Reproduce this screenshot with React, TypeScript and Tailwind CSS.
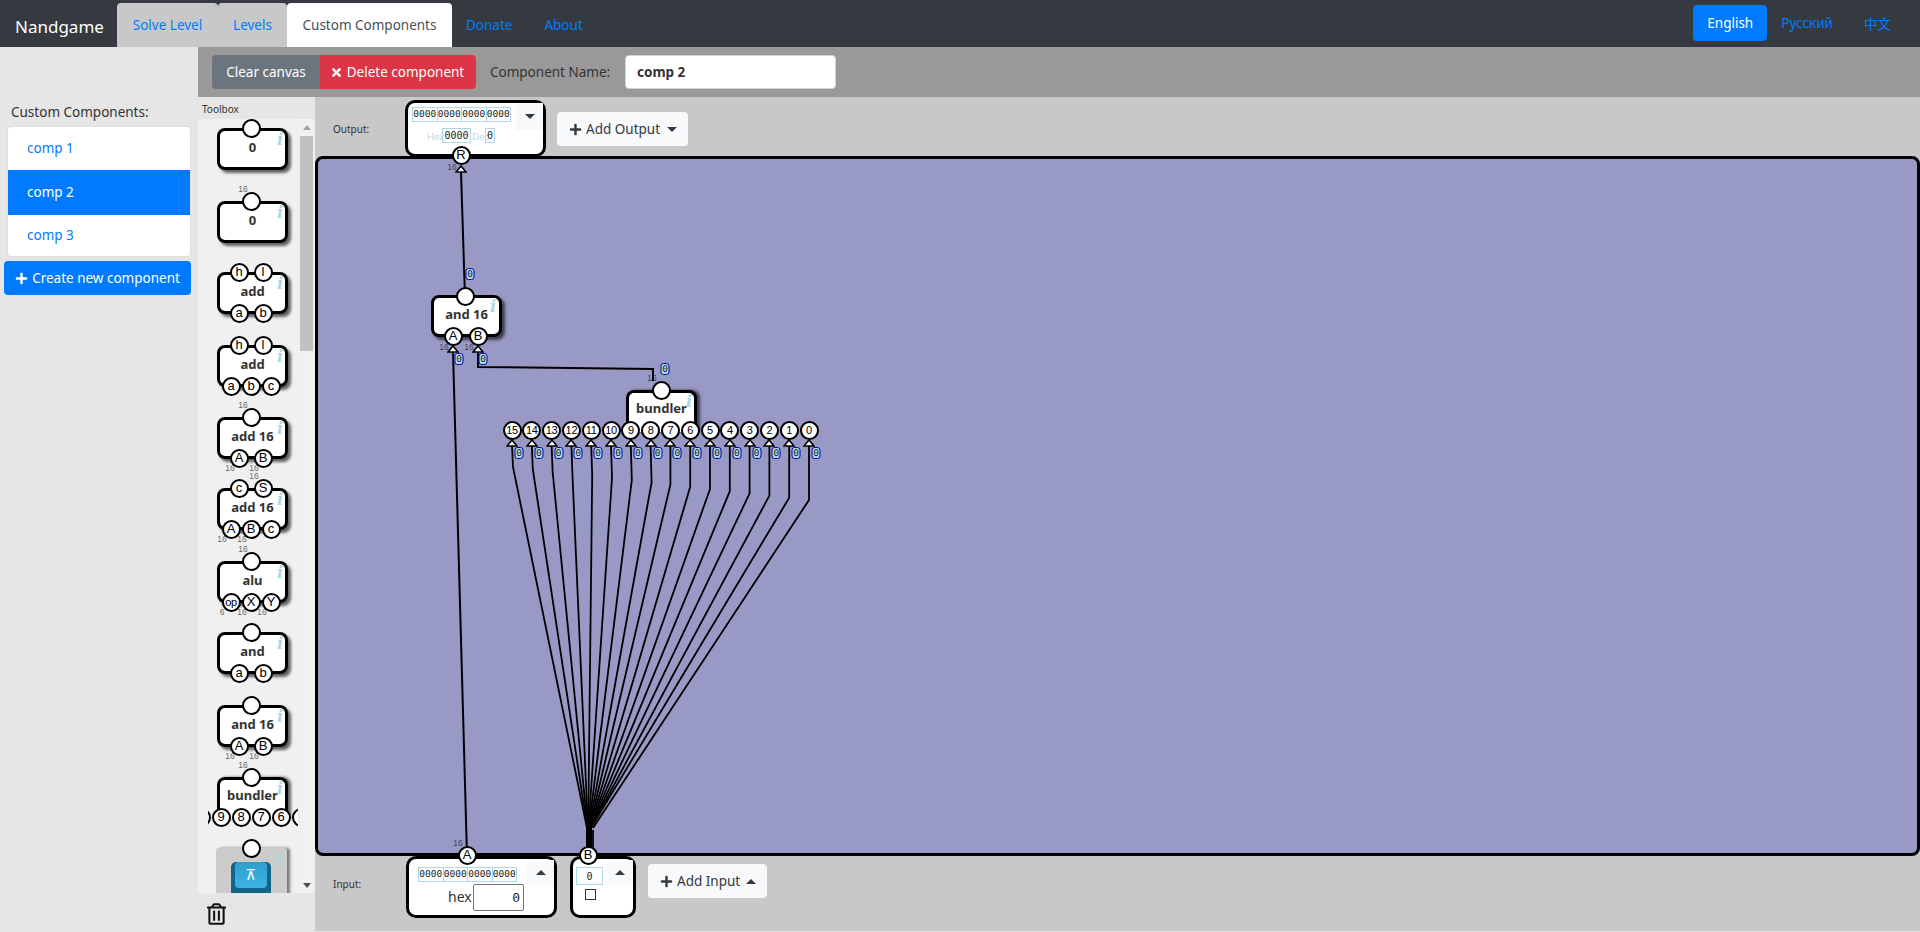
import React from "react";
import { FaPlus, FaTimes, FaRegTrashAlt } from "react-icons/fa";

const SANS = "font-['Noto_Sans',sans-serif]";
const MONO = "font-['DejaVu_Sans_Mono',monospace]";

function Pin({ label, cx, cy, small }: { label?: string; cx: number; cy: number; small?: boolean }) {
  const tight = small || (label ?? "").length > 1;
  return (
    <div
      className={`absolute z-10 flex h-[19px] w-[19px] items-center justify-center rounded-full border-2 border-black bg-white font-['Liberation_Sans',sans-serif] text-black ${tight ? "text-[11px] tracking-[-0.3px]" : "text-[13px]"}`}
      style={{ left: cx - 9.5, top: cy - 9.5 }}
    >
      {label}
    </div>
  );
}

function Tiny({ x, y, children }: { x: number; y: number; children: React.ReactNode }) {
  return (
    <span
      className="absolute z-10 -translate-x-1/2 -translate-y-1/2 font-['Liberation_Sans',sans-serif] text-[8.5px] leading-none text-[#000000a0]"
      style={{ left: x, top: y }}
    >
      {children}
    </span>
  );
}

function Info({ x, y }: { x: number; y: number }) {
  return (
    <span
      className="absolute font-['DejaVu_Serif',serif] text-[16px] font-bold italic leading-none text-[#add8e6]"
      style={{ left: x, top: y }}
    >
      i
    </span>
  );
}

type Item = {
  title: string;
  top?: string[];
  bottom?: string[];
  topTiny?: [number, string][];
  bottomTiny?: [number, string][];
  mt: string;
};

const tools: Item[] = [
  { title: "0", top: [""], mt: "mt-[9px]" },
  { title: "0", top: [""], topTiny: [[23, "16"]], mt: "mt-[31px]" },
  { title: "add", top: ["h", "l"], bottom: ["a", "b"], mt: "mt-[29px]" },
  { title: "add", top: ["h", "l"], bottom: ["a", "b", "c"], mt: "mt-[31px]" },
  { title: "add 16", top: [""], bottom: ["A", "B"], topTiny: [[23, "16"]], bottomTiny: [[10, "16"], [34, "16"]], mt: "mt-[30px]" },
  { title: "add 16", top: ["c", "S"], bottom: ["A", "B", "c"], topTiny: [[34, "16"]], bottomTiny: [[2, "16"], [22, "16"]], mt: "mt-[29px]" },
  { title: "alu", top: [""], bottom: ["op", "X", "Y"], topTiny: [[23, "16"]], bottomTiny: [[2, "6"], [22, "16"], [42, "16"]], mt: "mt-[31px]" },
  { title: "and", top: [""], bottom: ["a", "b"], mt: "mt-[29px]" },
  { title: "and 16", top: [""], bottom: ["A", "B"], bottomTiny: [[10, "16"], [34, "16"]], mt: "mt-[31px]" },
];

function ToolNode({ item }: { item: Item }) {
  const pinX = (n: number) => (n === 1 ? [31] : n === 2 ? [19, 43] : [11, 31, 51]);
  const tops = item.top ?? [];
  const bots = item.bottom ?? [];
  return (
    <div className={`relative ml-[19px] h-[42px] w-[71px] shrink-0 rounded-[8px] border-[3px] border-black bg-white shadow-[3px_3px_3px_rgba(0,0,0,0.6)] ${item.mt}`}>
      <div className="flex h-full -translate-y-[1px] items-center justify-center text-[13px] font-bold text-[#333]">{item.title}</div>
      <Info x={57} y={1} />
      {tops.map((l, i) => (
        <Pin key={i} label={l} cx={pinX(tops.length)[i]} cy={-3} />
      ))}
      {bots.map((l, i) => (
        <Pin key={i} label={l} cx={pinX(bots.length)[i]} cy={38} />
      ))}
      {(item.topTiny ?? []).map(([x, t], i) => (
        <Tiny key={i} x={x} y={-15}>{t}</Tiny>
      ))}
      {(item.bottomTiny ?? []).map(([x, t], i) => (
        <Tiny key={i} x={x} y={48}>{t}</Tiny>
      ))}
    </div>
  );
}

function Toolbox() {
  return (
    <div className="flex w-[117px] shrink-0 flex-col bg-[#e6e6e6]">
      <div className="flex h-[22px] items-center pl-[4px] pt-[3px] text-[10px] text-[#333]">Toolbox</div>
      <div className="relative h-[774px] overflow-hidden bg-[#f0f0f0]">
        <div className="flex flex-col">
          {tools.map((t, i) => (
            <ToolNode key={i} item={t} />
          ))}
          <div className="relative ml-[19px] mt-[30px] h-[42px] w-[71px] shrink-0 rounded-t-[8px] border-[3px] border-b-0 border-black bg-white shadow-[3px_0_3px_rgba(0,0,0,0.6)]">
            <div className="flex h-[31px] items-center justify-center text-[13px] font-bold text-[#333]">bundler</div>
            <Info x={57} y={1} />
            <Pin cx={31} cy={-3} />
            <Tiny x={23} y={-15}>16</Tiny>
            <div className="absolute left-[-12px] top-[26px] h-[22px] w-[90px] overflow-hidden">
              {["", "9", "8", "7", "6", ""].map((l, i) => (
                <Pin key={i} label={l} cx={-7 + i * 20} cy={11} />
              ))}
            </div>
          </div>
          <div className="relative ml-[18px] mt-[29px] h-[80px] w-[71px] shrink-0 rounded-[3px] bg-[#cccccc] shadow-[3px_0_3px_rgba(0,0,0,0.5)]">
            <Pin cx={35} cy={0} />
            <Info x={60} y={5} />
            <div className="absolute left-[15px] top-[14px] h-[50px] w-[40px] rounded-[5px] bg-[#14648a]">
              <div className="mx-[4px] flex h-[26px] items-center justify-center rounded-[4px] bg-gradient-to-b from-[#2e9dcc] to-[#3bb4e4] font-['DejaVu_Sans',sans-serif] text-[15px] text-white">⊼</div>
            </div>
          </div>
        </div>
        <div className="absolute right-[2px] top-0 flex h-full w-[13px] flex-col items-center bg-[#f1f1f1]">
          <div className="mt-[6px] h-0 w-0 border-x-[4px] border-b-[5px] border-x-transparent border-b-[#a3a3a3]" />
          <div className="mt-[6px] h-[215px] w-full bg-[#c1c1c1]" />
          <div className="mt-auto mb-[5px] h-0 w-0 border-x-[4px] border-t-[5px] border-x-transparent border-t-[#505050]" />
        </div>
      </div>
      <div className="flex flex-1 items-center pl-[9px] pt-[3px] text-[#111]">
        <FaRegTrashAlt className="h-[22px] w-[19px]" />
      </div>
    </div>
  );
}

function Bits({ w, className }: { w: number; className: string }) {
  return (
    <div className={`flex ${className}`}>
      {[0, 1, 2, 3].map((i) => (
        <span key={i} className={`-mr-[1px] flex h-[15px] items-center justify-center border border-[#add8e6] text-[9.5px] text-[#222] ${MONO}`} style={{ width: w }}>
          0000
        </span>
      ))}
    </div>
  );
}

function Caret({ up }: { up?: boolean }) {
  return up ? (
    <div className="h-0 w-0 border-x-[5px] border-b-[5px] border-x-transparent border-b-[#343a40]" />
  ) : (
    <div className="h-0 w-0 border-x-[5px] border-t-[5px] border-x-transparent border-t-[#343a40]" />
  );
}

function DropButton({ label, up, wide }: { label: string; up?: boolean; wide: string }) {
  return (
    <button className={`flex h-[34px] items-center justify-between rounded-[4px] bg-[#f8f9fa] pl-[12px] pr-[11px] text-[13.5px] text-[#343a40] ${wide}`}>
      <span className="flex items-center">
        <FaPlus className="mr-[4px] h-[13px] w-[13px]" />
        {label}
      </span>
      <Caret up={up} />
    </button>
  );
}

function Badge({ x, y }: { x: number; y: number }) {
  return (
    <span
      className={`absolute z-10 flex h-[12px] w-[9px] -translate-x-1/2 -translate-y-1/2 items-center justify-center rounded-[3px] border border-[#0000aa] bg-[#add8e6] text-[9.5px] leading-none text-[#222] ${MONO}`}
      style={{ left: x, top: y }}
    >
      0
    </span>
  );
}

function Tri({ x, y }: { x: number; y: number }) {
  return (
    <svg className="absolute z-10" style={{ left: x - 6, top: y }} width="12" height="8" viewBox="0 0 12 8">
      <path d="M6 1 L11 7 L1 7 Z" fill="#fff" stroke="#000" strokeWidth="1.6" />
    </svg>
  );
}

const pinXs = Array.from({ length: 16 }, (_, i) => 512 + i * 19.8);

const OX = 315;
const OY = 97;

function Diagram() {
  return (
    <>
      <svg className="absolute left-0 top-0" width="1605" height="835" viewBox={`${OX} ${OY} 1605 835`} fill="none" stroke="#000" strokeWidth="2">
        <path d="M461 172 L465 297" />
        <path d="M453 352 L467 856" />
        <path d="M478 352 L478 367 L653 369 L653 381" />
        {pinXs.map((x, i) => {
          const bendY = 467 + i * 2.2;
          const bendX = x + (i < 8 ? 1 : 0);
          const endX = i < 14 ? 587 + i * 0.3 : 591 + (i - 14) * 2;
          return <path key={i} d={`M${x} 445 L${bendX} ${bendY} L${endX} 828`} strokeWidth="1.8" />;
        })}
        <path d="M589 824 L589 853" strokeWidth="6" />
        <path d="M593 830 L593 853" strokeWidth="1.8" />
      </svg>

      <Tri x={461 - OX} y={165 - OY} />
      <Tiny x={452 - OX} y={167 - OY}>16</Tiny>
      <Badge x={470 - OX} y={274 - OY} />

      <div className="absolute left-[116px] top-[198px] h-[42px] w-[71px] rounded-[8px] border-[3px] border-black bg-white shadow-[3px_3px_3px_rgba(0,0,0,0.6)]">
        <div className="flex h-full -translate-y-[1px] items-center justify-center text-[13px] font-bold text-[#333]">and 16</div>
        <Info x={56} y={1} />
      </div>
      <Pin cx={465 - OX} cy={296 - OY} />
      <Pin label="A" cx={453 - OX} cy={336 - OY} />
      <Pin label="B" cx={478 - OX} cy={336 - OY} />
      <Tri x={453 - OX} y={345 - OY} />
      <Tri x={478 - OX} y={345 - OY} />
      <Tiny x={444 - OX} y={347 - OY}>16</Tiny>
      <Tiny x={469 - OX} y={347 - OY}>16</Tiny>
      <Badge x={459 - OX} y={359 - OY} />
      <Badge x={483 - OX} y={359 - OY} />

      <Badge x={665 - OX} y={369 - OY} />
      <Tiny x={652 - OX} y={378 - OY}>16</Tiny>
      <div className="absolute left-[311px] top-[293px] h-[42px] w-[71px] rounded-t-[8px] border-[3px] border-b-0 border-black bg-white shadow-[3px_0_3px_rgba(0,0,0,0.6)]">
        <div className="flex h-[31px] items-center justify-center text-[13px] font-bold text-[#333]">bundler</div>
        <Info x={57} y={1} />
      </div>
      <Pin cx={661 - OX} cy={390 - OY} />
      {pinXs.map((x, i) => (
        <React.Fragment key={i}>
          <Pin label={String(15 - i)} cx={x - OX} cy={430 - OY} small />
          <Tri x={x - OX} y={439 - OY} />
          <Badge x={x + 7 - OX} y={453 - OY} />
        </React.Fragment>
      ))}

      <Tiny x={458 - OX} y={843 - OY}>16</Tiny>
      <Pin label="R" cx={461 - OX} cy={155 - OY} />
      <Pin label="A" cx={467 - OX} cy={855 - OY} />
      <Pin label="B" cx={588 - OX} cy={855 - OY} />
    </>
  );
}

export default function App() {
  return (
    <div className={`flex h-[932px] w-[1920px] flex-col overflow-hidden bg-[#e6e6e6] text-[13.5px] ${SANS}`}>
      <nav className="flex h-[47px] shrink-0 items-end bg-[#343a40]">
        <div className="mb-[12px] ml-[15px] w-[102px] text-[17px] leading-none text-white">Nandgame</div>
        <div className="flex h-[44px]">
          <a className="flex w-[101px] items-center justify-center rounded-t-[4px] bg-[#c8c8c8] text-[#007bff]">Solve Level</a>
          <a className="flex w-[69px] items-center justify-center rounded-t-[4px] bg-[#c8c8c8] text-[#007bff]">Levels</a>
          <a className="flex w-[165px] items-center justify-center rounded-t-[4px] bg-white text-[#495057]">Custom Components</a>
        </div>
        <div className="ml-[14px] flex h-[44px] items-center gap-[32px] text-[#007bff]">
          <a>Donate</a>
          <a>About</a>
        </div>
        <div className="ml-auto mb-[6px] mr-[29px] flex h-[36px] items-center text-[#007bff]">
          <a className="flex h-[36px] w-[74px] items-center justify-center rounded-[4px] bg-[#007bff] text-white">English</a>
          <a className="ml-[14px]">Русский</a>
          <a className="ml-[31px] font-['Noto_Sans_CJK_SC',sans-serif]">中文</a>
        </div>
      </nav>

      <div className="flex min-h-0 flex-1">
        <aside className="w-[198px] shrink-0 bg-[#e6e6e6] pt-[55px]">
          <div className="pl-[11px] leading-[20px] text-[#333]">Custom Components:</div>
          <div className="ml-[7px] mt-[4px] w-[184px] overflow-hidden rounded-[4px] border border-[#dfdfdf] bg-white">
            <div className="flex h-[43px] items-center pl-[19px] text-[#007bff]">comp 1</div>
            <div className="flex h-[45px] items-center bg-[#007bff] pl-[19px] text-white">comp 2</div>
            <div className="flex h-[41px] items-center pl-[19px] text-[#007bff]">comp 3</div>
          </div>
          <button className="ml-[4px] mt-[4px] flex h-[34px] w-[187px] items-center justify-center rounded-[4px] bg-[#007bff] text-white">
            <FaPlus className="mr-[4px] h-[13px] w-[13px]" />
            Create new component
          </button>
        </aside>

        <div className="flex min-w-0 flex-1 flex-col">
          <div className="flex h-[50px] shrink-0 items-center bg-[#999999] pl-[14px]">
            <button className="flex h-[34px] w-[108px] items-center justify-center rounded-l-[4px] bg-[#6c757d] text-white">Clear canvas</button>
            <button className="flex h-[34px] w-[156px] items-center justify-center rounded-r-[4px] bg-[#dc3545] pr-[2px] text-white">
              <FaTimes className="mr-[4px] h-[13px] w-[13px]" />
              Delete component
            </button>
            <span className="ml-[14px] w-[121px] text-[#333]">Component Name:</span>
            <input
              readOnly
              value="comp 2"
              className={`ml-[14px] h-[34px] w-[211px] rounded-[4px] border border-[#ced4da] bg-white px-[11px] text-[13.5px] font-bold text-[#333] ${SANS}`}
            />
          </div>

          <div className="flex min-h-0 flex-1">
            <Toolbox />
            <div className="relative flex h-[834px] min-w-0 flex-1 flex-col bg-[#c8c8c8]">
              <div className="flex h-[59px] shrink-0 items-start">
                <span className="ml-[18px] mt-[25px] w-[72px] text-[10px] leading-[14px] text-[#333]">Output:</span>
                <div className="relative mt-[3px] h-[57px] w-[141px] shrink-0 rounded-[10px] border-[3px] border-black bg-white">
                  <Bits w={25.5} className="absolute left-[4px] top-[4px]" />
                  <div className="absolute left-[108px] top-0 flex h-[27px] w-[27px] items-center justify-center bg-[#f8f9fa]"><Caret /></div>
                  <span className="absolute left-[19px] top-[26px] text-[9.5px] leading-[15px] text-[#bcd9e4]">Hex</span>
                  <span className={`absolute left-[34px] top-[25px] flex h-[15px] w-[29px] items-center justify-center border border-[#add8e6] text-[10px] text-[#222] ${MONO}`}>0000</span>
                  <span className="absolute left-[64px] top-[26px] text-[9.5px] leading-[15px] text-[#bcd9e4]">Dec</span>
                  <span className={`absolute left-[77px] top-[25px] flex h-[15px] w-[10px] items-center justify-center border border-[#add8e6] text-[10px] text-[#222] ${MONO}`}>0</span>
                </div>
                <div className="ml-[11px] mt-[15px]"><DropButton label="Add Output" wide="w-[131px]" /></div>
              </div>

              <div className="h-[700px] shrink-0 rounded-[8px] border-[3px] border-black bg-[#9999c6]" />

              <div className="flex h-[75px] shrink-0 items-start">
                <span className="ml-[18px] mt-[21px] w-[73px] text-[10px] leading-[14px] text-[#333]">Input:</span>
                <div className="relative h-[62px] w-[151px] shrink-0 rounded-[10px] border-[3px] border-black bg-white">
                  <Bits w={25.5} className="absolute left-[9px] top-[8px]" />
                  <div className="absolute left-[118px] top-[1px] flex h-[25px] w-[27px] items-center justify-center bg-[#f8f9fa]"><Caret up /></div>
                  <span className="absolute left-[39px] top-[26px] text-[14px] leading-[24px] text-[#333]">hex</span>
                  <span className={`absolute left-[64px] top-[25px] flex h-[27px] w-[51px] items-center justify-end rounded-[2px] border border-[#767676] pr-[3px] text-[13px] text-[#222] ${MONO}`}>0</span>
                </div>
                <div className="relative ml-[13px] h-[62px] w-[66px] shrink-0 rounded-[10px] border-[3px] border-black bg-white">
                  <span className={`absolute left-[3px] top-[8px] flex h-[18px] w-[27px] items-center justify-center border border-[#add8e6] text-[10px] text-[#222] ${MONO}`}>0</span>
                  <span className="absolute left-[12px] top-[30px] h-[11px] w-[11px] border-[1.5px] border-[#333] bg-white" />
                  <div className="absolute left-[34px] top-[1px] flex h-[25px] w-[26px] items-center justify-center bg-[#f8f9fa]"><Caret up /></div>
                </div>
                <div className="ml-[12px] mt-[8px]"><DropButton label="Add Input" up wide="w-[119px]" /></div>
              </div>

              <Diagram />
            </div>
          </div>
        </div>
      </div>
    </div>
  );
}
